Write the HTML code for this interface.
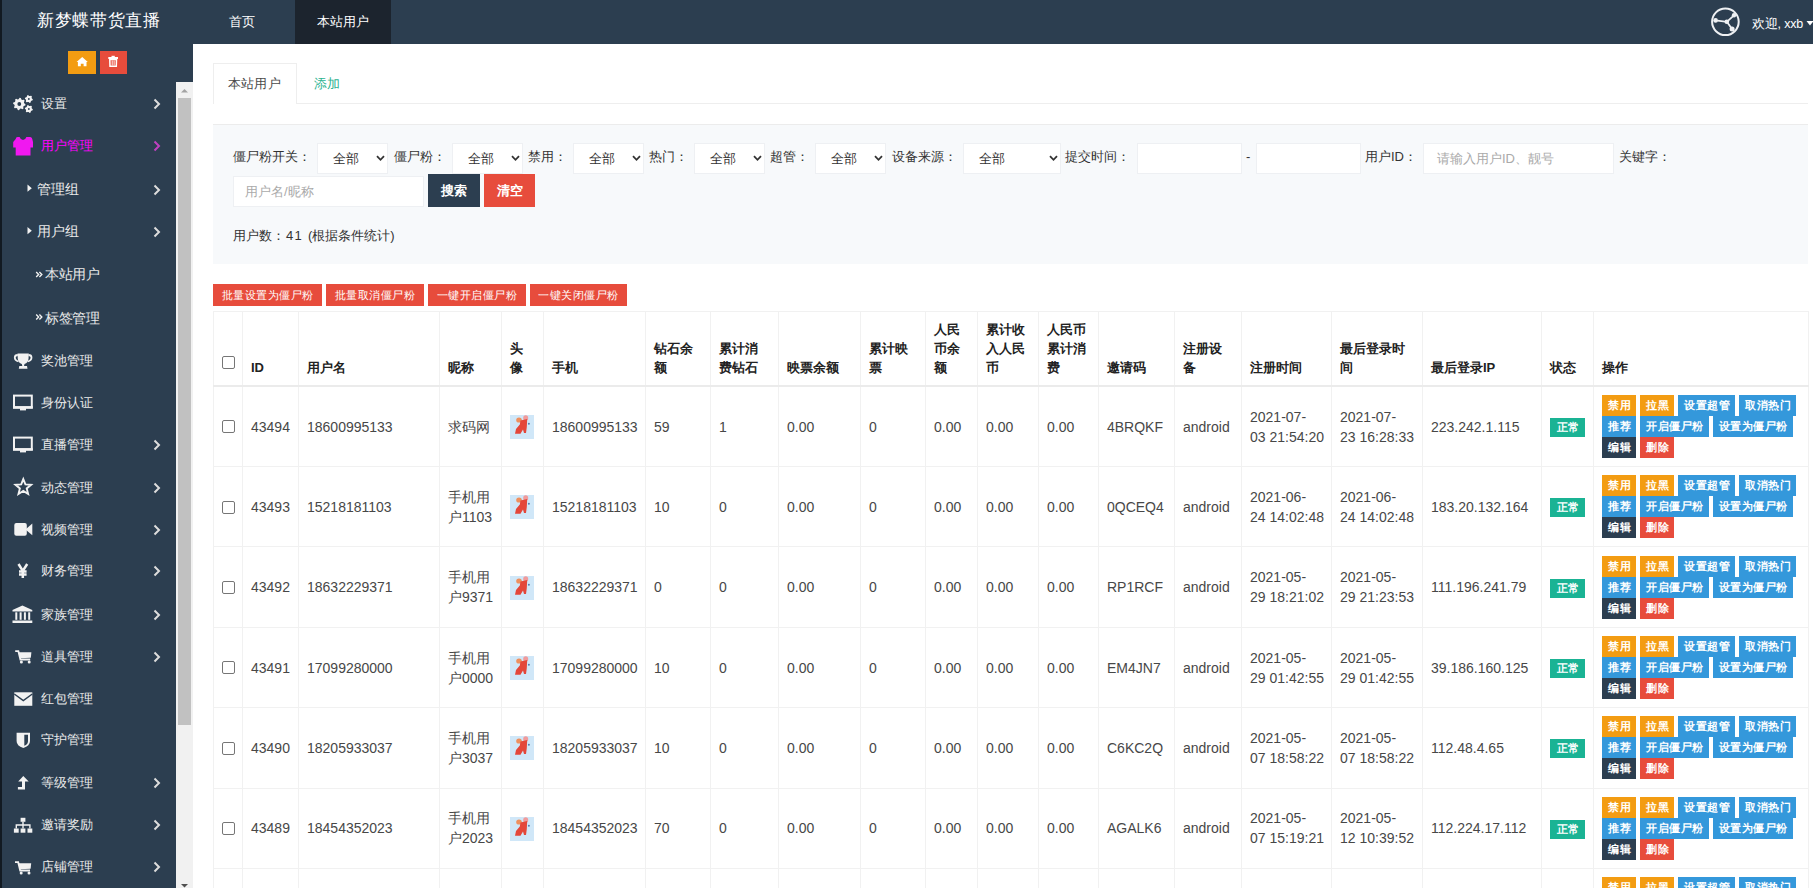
<!DOCTYPE html><html><head><meta charset="utf-8"><style>

*{box-sizing:border-box}
html,body{margin:0;padding:0}
body{width:1813px;height:888px;overflow:hidden;position:relative;background:#fff;font-family:"Liberation Sans",sans-serif;color:#333}
.a{position:absolute}
#nav{left:0;top:0;width:1813px;height:44px;background:#2c3e50}
#side{left:0;top:0;width:193px;height:888px;background:#2c3e50}
#strip{left:0;top:0;width:2px;height:888px;background:#121a22}
.logo{left:37px;top:10px;font-size:17px;letter-spacing:0.7px;color:#fff;line-height:22px;white-space:nowrap}
.ntab{top:0;height:44px;line-height:44px;font-size:12.5px;letter-spacing:-0.15px;color:#fff;text-align:center}
.mi{left:0;width:176px;height:20px;line-height:20px;font-size:13px;color:#eaeaea;white-space:nowrap}
.mi .t{position:absolute;left:41px;top:0}
.mi .ic{position:absolute;left:13px;top:0;width:20px;height:20px}
.mi .ar{position:absolute;left:153px;top:4px;width:8px;height:12px}
.sub .t{left:37px;font-size:13.5px;letter-spacing:-0.15px}
.sub2 .t{left:45px;font-size:13.5px;letter-spacing:-0.4px}
#sb{left:176px;top:82px;width:17px;height:806px;background:#f1f1f1}
#thumb{left:178px;top:98px;width:13px;height:627px;background:#c1c1c1}
.btn{font-weight:bold;display:inline-block;color:#fff;white-space:nowrap;text-align:center}
.sel{position:absolute;top:143px;height:31px;background:#fff;border:1px solid #eef0f3;font-size:13px;color:#333}
.sel span{position:absolute;left:15px;top:6px;line-height:18px}
.sel svg{position:absolute;top:11px}
.lbl{position:absolute;top:148px;font-size:13px;line-height:18px;color:#333;white-space:nowrap}
.inp{position:absolute;background:#fff;border:1px solid #eef0f3;font-size:13px;color:#aaa}
table{position:absolute;left:213px;top:311px;width:1595px;border-collapse:collapse;table-layout:fixed;font-size:14px;color:#333}
td,th{border:1px solid #f1f1f1;padding:0 8px;vertical-align:middle;text-align:left;overflow:hidden}
th{border-bottom:2px solid #ebebeb;white-space:nowrap;vertical-align:bottom;padding-bottom:8px;font-weight:bold;font-size:13px;line-height:19px;color:#222}
td{line-height:20px;white-space:nowrap;color:#474747}
.ops{line-height:0;padding:0 0 0 8px}
.ob{font-weight:bold;display:inline-block;height:21px;line-height:21px;font-size:11px;letter-spacing:0.5px;color:#fff;padding:0 5px 0 6px;margin-right:4px;vertical-align:top}
.or{background:#f39c12}.bl{background:#3498db}.dk{background:#2c3e50}.rd{background:#e74c3c}
.badge{font-weight:bold;display:inline-block;height:19px;line-height:19px;font-size:11px;letter-spacing:0.5px;color:#fff;background:#1ab394;padding:0 5.5px 0 6.5px}
.cb{display:inline-block;width:13px;height:13px;border:1px solid #767676;border-radius:2px;background:#fff;vertical-align:middle}

</style></head><body>
<div class="a" id="side"></div><div class="a" id="nav"></div><div class="a" id="strip"></div>
<div class="a logo">新梦蝶带货直播</div>
<div class="a ntab" style="left:215px;width:54px">首页</div>
<div class="a ntab" style="left:295px;width:96px;background:#1c242e">本站用户</div>
<div class="a" style="left:68px;top:51px;width:28px;height:23px;background:#f39c12"></div>
<div class="a" style="left:100px;top:51px;width:27px;height:23px;background:#e74c3c"></div>
<div class="a mi" style="top:93.5px;color:#eaeaea"><span class="t">设置</span><svg class="ar" viewBox="0 0 8 12"><path d="M1.5 1.5 L6 6 L1.5 10.5" fill="none" stroke="#ddd" stroke-width="2"/></svg></div>
<div class="a mi" style="top:135.7px;color:#ff00ff"><span class="t">用户管理</span><svg class="ar" viewBox="0 0 8 12"><path d="M1.5 1.5 L6 6 L1.5 10.5" fill="none" stroke="#c040c0" stroke-width="2"/></svg></div>
<div class="a mi sub" style="top:179.7px;color:#eaeaea"><span class="t">管理组</span><svg class="ar" viewBox="0 0 8 12"><path d="M1.5 1.5 L6 6 L1.5 10.5" fill="none" stroke="#ddd" stroke-width="2"/></svg></div>
<div class="a mi sub" style="top:221.9px;color:#eaeaea"><span class="t">用户组</span><svg class="ar" viewBox="0 0 8 12"><path d="M1.5 1.5 L6 6 L1.5 10.5" fill="none" stroke="#ddd" stroke-width="2"/></svg></div>
<div class="a mi sub2" style="top:265.3px;color:#eaeaea"><span class="t">本站用户</span></div>
<div class="a mi sub2" style="top:308.5px;color:#eaeaea"><span class="t">标签管理</span></div>
<div class="a mi" style="top:350.7px;color:#eaeaea"><span class="t">奖池管理</span></div>
<div class="a mi" style="top:393.0px;color:#eaeaea"><span class="t">身份认证</span></div>
<div class="a mi" style="top:435.0px;color:#eaeaea"><span class="t">直播管理</span><svg class="ar" viewBox="0 0 8 12"><path d="M1.5 1.5 L6 6 L1.5 10.5" fill="none" stroke="#ddd" stroke-width="2"/></svg></div>
<div class="a mi" style="top:477.6px;color:#eaeaea"><span class="t">动态管理</span><svg class="ar" viewBox="0 0 8 12"><path d="M1.5 1.5 L6 6 L1.5 10.5" fill="none" stroke="#ddd" stroke-width="2"/></svg></div>
<div class="a mi" style="top:519.5px;color:#eaeaea"><span class="t">视频管理</span><svg class="ar" viewBox="0 0 8 12"><path d="M1.5 1.5 L6 6 L1.5 10.5" fill="none" stroke="#ddd" stroke-width="2"/></svg></div>
<div class="a mi" style="top:561.0px;color:#eaeaea"><span class="t">财务管理</span><svg class="ar" viewBox="0 0 8 12"><path d="M1.5 1.5 L6 6 L1.5 10.5" fill="none" stroke="#ddd" stroke-width="2"/></svg></div>
<div class="a mi" style="top:604.5px;color:#eaeaea"><span class="t">家族管理</span><svg class="ar" viewBox="0 0 8 12"><path d="M1.5 1.5 L6 6 L1.5 10.5" fill="none" stroke="#ddd" stroke-width="2"/></svg></div>
<div class="a mi" style="top:647.0px;color:#eaeaea"><span class="t">道具管理</span><svg class="ar" viewBox="0 0 8 12"><path d="M1.5 1.5 L6 6 L1.5 10.5" fill="none" stroke="#ddd" stroke-width="2"/></svg></div>
<div class="a mi" style="top:688.9px;color:#eaeaea"><span class="t">红包管理</span></div>
<div class="a mi" style="top:730.3px;color:#eaeaea"><span class="t">守护管理</span></div>
<div class="a mi" style="top:772.8px;color:#eaeaea"><span class="t">等级管理</span><svg class="ar" viewBox="0 0 8 12"><path d="M1.5 1.5 L6 6 L1.5 10.5" fill="none" stroke="#ddd" stroke-width="2"/></svg></div>
<div class="a mi" style="top:815.2px;color:#eaeaea"><span class="t">邀请奖励</span><svg class="ar" viewBox="0 0 8 12"><path d="M1.5 1.5 L6 6 L1.5 10.5" fill="none" stroke="#ddd" stroke-width="2"/></svg></div>
<div class="a mi" style="top:857.2px;color:#eaeaea"><span class="t">店铺管理</span><svg class="ar" viewBox="0 0 8 12"><path d="M1.5 1.5 L6 6 L1.5 10.5" fill="none" stroke="#ddd" stroke-width="2"/></svg></div>
<div class="a" id="sb"></div><div class="a" id="thumb"></div>
<svg class="a" style="left:0;top:0" width="193" height="888" viewBox="0 0 193 888"><polygon points="25.49,104.30 25.31,105.51 23.73,106.10 23.24,106.92 23.46,108.59 22.49,109.32 20.95,108.61 20.02,108.85 19.00,110.19 17.79,110.01 17.20,108.43 16.38,107.94 14.71,108.16 13.98,107.19 14.69,105.65 14.45,104.72 13.11,103.70 13.29,102.49 14.87,101.90 15.36,101.08 15.14,99.41 16.11,98.68 17.65,99.39 18.58,99.15 19.60,97.81 20.81,97.99 21.40,99.57 22.22,100.06 23.89,99.84 24.62,100.81 23.91,102.35 24.15,103.28" fill="#f2f2f2"/><circle cx="19.3" cy="104" r="1.9" fill="#2c3e50"/><polygon points="32.84,99.26 32.64,100.29 31.43,100.72 30.89,101.33 30.62,102.59 29.63,102.92 28.65,102.09 27.85,101.94 26.63,102.33 25.84,101.64 26.07,100.37 25.81,99.60 24.86,98.74 25.06,97.71 26.27,97.28 26.81,96.67 27.08,95.41 28.07,95.08 29.05,95.91 29.85,96.06 31.07,95.67 31.86,96.36 31.63,97.63 31.89,98.40" fill="#f2f2f2"/><circle cx="28.85" cy="99" r="0.9" fill="#2c3e50"/><polygon points="32.84,109.26 32.64,110.29 31.43,110.72 30.89,111.33 30.62,112.59 29.63,112.92 28.65,112.09 27.85,111.94 26.63,112.33 25.84,111.64 26.07,110.37 25.81,109.60 24.86,108.74 25.06,107.71 26.27,107.28 26.81,106.67 27.08,105.41 28.07,105.08 29.05,105.91 29.85,106.06 31.07,105.67 31.86,106.36 31.63,107.63 31.89,108.40" fill="#f2f2f2"/><circle cx="28.85" cy="109" r="0.9" fill="#2c3e50"/><path d="M15.7 139 Q15.7 137 17.7 137 L19.6 137 Q20.6 140 23 140 Q25.4 140 26.4 137 L30.2 137 Q32.2 137 32.4 139.5 L33 142 L33 147.5 L30.5 147.5 L30.5 155.6 L15.7 155.6 L15.7 147.5 L13.2 147.5 L13.2 142 Z" fill="#f018f0"/><path d="M27.5 184.6 L31.8 188.2 L27.5 191.79999999999998 Z" fill="#f2f2f2"/><path d="M27.5 227.1 L31.8 230.7 L27.5 234.29999999999998 Z" fill="#f2f2f2"/><path d="M36.2 272.1 L38.6 274.5 L36.2 276.9 M39.4 272.1 L41.8 274.5 L39.4 276.9" fill="none" stroke="#f2f2f2" stroke-width="1.4"/><path d="M36.2 314.6 L38.6 317 L36.2 319.4 M39.4 314.6 L41.8 317 L39.4 319.4" fill="none" stroke="#f2f2f2" stroke-width="1.4"/><path d="M17.5 353.5 L28.8 353.5 L28.5 359 Q28 363 24.5 364 L24 366 L27 366 L27.5 368.7 L18.8 368.7 L19.3 366 L22.3 366 L21.8 364 Q18.3 363 17.8 359 Z" fill="#f2f2f2"/><path d="M17.8 355 Q14.8 355 14.8 357.5 Q14.8 360.5 18.5 361.5 M28.5 355 Q31.5 355 31.5 357.5 Q31.5 360.5 27.8 361.5" fill="none" stroke="#f2f2f2" stroke-width="1.8"/><rect x="14" y="395.6" width="17.8" height="12" fill="none" stroke="#f2f2f2" stroke-width="2"/><rect x="13" y="406.1" width="19.8" height="2.5" fill="#f2f2f2"/><rect x="20" y="408.1" width="6" height="2.3" fill="#f2f2f2"/><rect x="14" y="437.6" width="17.8" height="12" fill="none" stroke="#f2f2f2" stroke-width="2"/><rect x="13" y="448.1" width="19.8" height="2.5" fill="#f2f2f2"/><rect x="20" y="450.1" width="6" height="2.3" fill="#f2f2f2"/><polygon points="23.30,479.10 25.42,484.39 31.10,484.77 26.72,488.41 28.12,493.93 23.30,490.90 18.48,493.93 19.88,488.41 15.50,484.77 21.18,484.39" fill="none" stroke="#f2f2f2" stroke-width="1.9" stroke-linejoin="miter"/><rect x="14.3" y="523" width="12.5" height="12.8" rx="2" fill="#f2f2f2"/><path d="M25.5 529.4 L32.3 523.5 L32.3 535.3 Z" fill="#f2f2f2"/><path d="M18.5 564 L22.8 571 L27.2 564 M22.8 571 L22.8 578 M19 571.5 L26.6 571.5 M19 574.5 L26.6 574.5" fill="none" stroke="#f2f2f2" stroke-width="2.5"/><path d="M12.5 610 L22.4 605.5 L32.3 610 L32.3 611.5 L12.5 611.5 Z" fill="#f2f2f2"/><rect x="15.3" y="612.3" width="2" height="7.5" fill="#f2f2f2"/><rect x="19.6" y="612.3" width="2" height="7.5" fill="#f2f2f2"/><rect x="23.9" y="612.3" width="2" height="7.5" fill="#f2f2f2"/><rect x="28.2" y="612.3" width="2" height="7.5" fill="#f2f2f2"/><rect x="12.5" y="620.5" width="19.8" height="2.5" fill="#f2f2f2"/><path d="M15.2 651.2 L18.4 651.2 L20.4 659.5 L30.2 659.5" fill="none" stroke="#f2f2f2" stroke-width="1.8"/><path d="M18.8 652.3 L31.4 652.3 L30.799999999999997 657.8 L20.2 658.3 Z" fill="#f2f2f2"/><circle cx="21.4" cy="662" r="1.5" fill="#f2f2f2"/><circle cx="29.2" cy="662" r="1.5" fill="#f2f2f2"/><path d="M15 862.2 L18.2 862.2 L20.2 870.5 L30 870.5" fill="none" stroke="#f2f2f2" stroke-width="1.8"/><path d="M18.6 863.3 L31.2 863.3 L30.6 868.8 L20 869.3 Z" fill="#f2f2f2"/><circle cx="21.2" cy="873" r="1.5" fill="#f2f2f2"/><circle cx="29" cy="873" r="1.5" fill="#f2f2f2"/><rect x="14.3" y="692.3" width="18" height="13.5" fill="#f2f2f2"/><path d="M14.3 694 L23.3 700.5 L32.3 694" fill="none" stroke="#2c3e50" stroke-width="1.5"/><path d="M16.6 732.8 L30 732.8 L30 741 Q30 746 23.3 748 Q16.6 746 16.6 741 Z" fill="#f2f2f2"/><path d="M24.3 734.8 L28 734.8 L28 741 Q28 744.5 24.3 745.8 Z" fill="#2c3e50"/><path d="M23.3 776 L28.7 781.5 L25 781.5 L25 789.5 L17.9 789.5 L17.9 787 L22 787 L22 781.5 L18.2 781.5 Z" fill="#f2f2f2"/><rect x="20.6" y="817.8" width="4.8" height="4" fill="#f2f2f2"/><path d="M23 821.8 L23 825 M16.3 828.5 L16.3 825 L29.9 825 L29.9 828.5 M23 825 L23 828.5" fill="none" stroke="#f2f2f2" stroke-width="1.4"/><rect x="13.9" y="828.5" width="4.8" height="4.2" fill="#f2f2f2"/><rect x="20.6" y="828.5" width="4.8" height="4.2" fill="#f2f2f2"/><rect x="27.5" y="828.5" width="4.8" height="4.2" fill="#f2f2f2"/><path d="M82.2 57 L87.8 62 L86.5 62 L86.5 66.2 L83.6 66.2 L83.6 63.8 L80.8 63.8 L80.8 66.2 L77.9 66.2 L77.9 62 L76.6 62 Z" fill="#fff"/><rect x="108.3" y="57" width="9.7" height="2" fill="#fff"/><rect x="111.5" y="55.8" width="3.3" height="1.6" fill="#fff"/><path d="M109.8 59.5 L116.5 59.5 L116.3 66.2 L110 66.2 Z" fill="none" stroke="#fff" stroke-width="1.5"/><path d="M112.2 60.5 L112.2 65.5 M114.1 60.5 L114.1 65.5" stroke="#fff" stroke-width="0.9"/><path d="M181 92.5 L184.5 89 L188 92.5 Z" fill="#a3a3a3"/><path d="M181 884 L184.5 887.5 L188 884 Z" fill="#505050"/></svg>
<svg class="a" style="left:1700px;top:0" width="50" height="44" viewBox="1700 0 50 44"><circle cx="1725.4" cy="21.8" r="13.3" fill="none" stroke="#eef0f3" stroke-width="2"/><path d="M1715.6 20.4 L1726.8 21.8 L1734 15.3 M1726.8 21.8 L1732.1 29" fill="none" stroke="#eef0f3" stroke-width="1.8"/><circle cx="1715.6" cy="20.4" r="2.3" fill="#eef0f3"/><circle cx="1726.8" cy="21.8" r="2.3" fill="#eef0f3"/><circle cx="1734" cy="15.3" r="2.2" fill="#eef0f3"/><circle cx="1732.1" cy="29" r="2.5" fill="#eef0f3"/></svg><svg class="a" style="left:1805px;top:20px" width="8" height="7" viewBox="0 0 8 7"><path d="M1.5 1 L8.5 1 L5 5.5 Z" fill="#fff"/></svg>
<div class="a" style="left:1752px;top:15.5px;font-size:12.5px;letter-spacing:-0.2px;line-height:16px;color:#fff;white-space:nowrap">欢迎, xxb</div>
<div class="a" style="left:213px;top:103px;width:1595px;height:1px;background:#eeeeee"></div>
<div class="a" style="left:213px;top:63px;width:84px;height:41px;background:#fff;border:1px solid #eeeeee;border-bottom:none"></div>
<div class="a" style="left:228px;top:75px;font-size:13px;letter-spacing:0.2px;line-height:18px;color:#4a4a4a">本站用户</div>
<div class="a" style="left:314px;top:75px;font-size:13px;line-height:18px;color:#2db491">添加</div>
<div class="a" style="left:213px;top:123.5px;width:1595px;height:140.5px;background:#f7f9fb;border-top:1px solid #ececec"></div>
<div class="lbl" style="left:233px">僵尸粉开关：</div>
<div class="lbl" style="left:394px">僵尸粉：</div>
<div class="lbl" style="left:528px">禁用：</div>
<div class="lbl" style="left:649px">热门：</div>
<div class="lbl" style="left:770px">超管：</div>
<div class="lbl" style="left:892px">设备来源：</div>
<div class="lbl" style="left:1065px">提交时间：</div>
<div class="lbl" style="left:1246px">-</div>
<div class="lbl" style="left:1365px">用户ID：</div>
<div class="lbl" style="left:1619px">关键字：</div>
<div class="sel" style="left:317px;width:71px"><span>全部</span><svg style="left:58px" width="9" height="7" viewBox="0 0 9 7"><path d="M1 1.2 L4.5 4.8 L8 1.2" fill="none" stroke="#333" stroke-width="1.8"/></svg></div>
<div class="sel" style="left:452px;width:71px"><span>全部</span><svg style="left:58px" width="9" height="7" viewBox="0 0 9 7"><path d="M1 1.2 L4.5 4.8 L8 1.2" fill="none" stroke="#333" stroke-width="1.8"/></svg></div>
<div class="sel" style="left:573px;width:71px"><span>全部</span><svg style="left:58px" width="9" height="7" viewBox="0 0 9 7"><path d="M1 1.2 L4.5 4.8 L8 1.2" fill="none" stroke="#333" stroke-width="1.8"/></svg></div>
<div class="sel" style="left:694px;width:71px"><span>全部</span><svg style="left:58px" width="9" height="7" viewBox="0 0 9 7"><path d="M1 1.2 L4.5 4.8 L8 1.2" fill="none" stroke="#333" stroke-width="1.8"/></svg></div>
<div class="sel" style="left:815px;width:71px"><span>全部</span><svg style="left:58px" width="9" height="7" viewBox="0 0 9 7"><path d="M1 1.2 L4.5 4.8 L8 1.2" fill="none" stroke="#333" stroke-width="1.8"/></svg></div>
<div class="sel" style="left:963px;width:98px"><span>全部</span><svg style="left:85px" width="9" height="7" viewBox="0 0 9 7"><path d="M1 1.2 L4.5 4.8 L8 1.2" fill="none" stroke="#333" stroke-width="1.8"/></svg></div>
<div class="inp" style="left:1137px;top:143px;width:105px;height:31px"></div>
<div class="inp" style="left:1256px;top:143px;width:105px;height:31px"></div>
<div class="inp" style="left:1423px;top:143px;width:191px;height:31px"><span style="position:absolute;left:13px;top:6px;line-height:18px">请输入用户ID、靓号</span></div>
<div class="inp" style="left:233px;top:176px;width:191px;height:31px"><span style="position:absolute;left:11px;top:6px;line-height:18px">用户名/昵称</span></div>
<div class="a btn" style="left:428px;top:174px;width:52px;height:33px;line-height:33px;font-size:13px;background:#2c3e50">搜索</div>
<div class="a btn" style="left:484px;top:174px;width:51px;height:33px;line-height:33px;font-size:13px;background:#e74c3c">清空</div>
<div class="lbl" style="left:233px;top:227px">用户数：<span style="margin-left:1px;letter-spacing:1.3px">41 </span>(根据条件统计)</div>
<div class="a btn" style="left:213px;top:284px;width:109px;height:22px;line-height:22px;font-size:11px;letter-spacing:0.5px;font-weight:normal;background:#e74c3c">批量设置为僵尸粉</div>
<div class="a btn" style="left:326px;top:284px;width:98px;height:22px;line-height:22px;font-size:11px;letter-spacing:0.5px;font-weight:normal;background:#e74c3c">批量取消僵尸粉</div>
<div class="a btn" style="left:428px;top:284px;width:98px;height:22px;line-height:22px;font-size:11px;letter-spacing:0.5px;font-weight:normal;background:#e74c3c">一键开启僵尸粉</div>
<div class="a btn" style="left:530px;top:284px;width:97px;height:22px;line-height:22px;font-size:11px;letter-spacing:0.5px;font-weight:normal;background:#e74c3c">一键关闭僵尸粉</div>
<table><colgroup><col style="width:29px"><col style="width:56px"><col style="width:141px"><col style="width:62px"><col style="width:42px"><col style="width:102px"><col style="width:65px"><col style="width:68px"><col style="width:82px"><col style="width:65px"><col style="width:52px"><col style="width:61px"><col style="width:60px"><col style="width:76px"><col style="width:67px"><col style="width:90px"><col style="width:91px"><col style="width:119px"><col style="width:52px"><col style="width:215px"></colgroup>
<tr style="height:74.7px"><th><span class="cb" style="position:relative;top:-6.5px"></span></th><th>ID</th><th>用户名</th><th>昵称</th><th>头<br>像</th><th>手机</th><th>钻石余<br>额</th><th>累计消<br>费钻石</th><th>映票余额</th><th>累计映<br>票</th><th>人民<br>币余<br>额</th><th>累计收<br>入人民<br>币</th><th>人民币<br>累计消<br>费</th><th>邀请码</th><th>注册设<br>备</th><th>注册时间</th><th>最后登录时<br>间</th><th>最后登录IP</th><th>状态</th><th>操作</th></tr>
<tr style="height:80.38px"><td><span class="cb" style="position:relative;top:-1px"></span></td><td>43494</td><td>18600995133</td><td>求码网</td><td><svg width="24" height="24" viewBox="0 0 24 24" style="vertical-align:middle;position:relative;top:0.5px"><rect width="24" height="24" fill="#d0e7f8"/><ellipse cx="9" cy="5" rx="2.8" ry="2.6" fill="#ef8f5e"/><ellipse cx="15.7" cy="2.9" rx="2.5" ry="2.6" fill="#f19b9b"/><path d="M10.5 5.5 L17.2 4 L16.8 12 L16 18 L14 18 L13 14.5 L10.5 18.8 L5 18.8 L6 14 L9.8 9.5 Z" fill="#e4473a"/><circle cx="18.9" cy="8.7" r="1" fill="#5a7fb0"/></svg></td><td>18600995133</td><td>59</td><td>1</td><td>0.00</td><td>0</td><td>0.00</td><td>0.00</td><td>0.00</td><td>4BRQKF</td><td>android</td><td>2021-07-<br>03 21:54:20</td><td>2021-07-<br>23 16:28:33</td><td>223.242.1.115</td><td><span class="badge">正常</span></td><td class="ops"><div><span class="ob or">禁用</span><span class="ob or">拉黑</span><span class="ob bl">设置超管</span><span class="ob bl">取消热门</span></div><div><span class="ob bl">推荐</span><span class="ob bl">开启僵尸粉</span><span class="ob bl">设置为僵尸粉</span></div><div><span class="ob dk">编辑</span><span class="ob rd">删除</span></div></td></tr>
<tr style="height:80.38px"><td><span class="cb" style="position:relative;top:-1px"></span></td><td>43493</td><td>15218181103</td><td>手机用<br>户1103</td><td><svg width="24" height="24" viewBox="0 0 24 24" style="vertical-align:middle;position:relative;top:0.5px"><rect width="24" height="24" fill="#d0e7f8"/><ellipse cx="9" cy="5" rx="2.8" ry="2.6" fill="#ef8f5e"/><ellipse cx="15.7" cy="2.9" rx="2.5" ry="2.6" fill="#f19b9b"/><path d="M10.5 5.5 L17.2 4 L16.8 12 L16 18 L14 18 L13 14.5 L10.5 18.8 L5 18.8 L6 14 L9.8 9.5 Z" fill="#e4473a"/><circle cx="18.9" cy="8.7" r="1" fill="#5a7fb0"/></svg></td><td>15218181103</td><td>10</td><td>0</td><td>0.00</td><td>0</td><td>0.00</td><td>0.00</td><td>0.00</td><td>0QCEQ4</td><td>android</td><td>2021-06-<br>24 14:02:48</td><td>2021-06-<br>24 14:02:48</td><td>183.20.132.164</td><td><span class="badge">正常</span></td><td class="ops"><div><span class="ob or">禁用</span><span class="ob or">拉黑</span><span class="ob bl">设置超管</span><span class="ob bl">取消热门</span></div><div><span class="ob bl">推荐</span><span class="ob bl">开启僵尸粉</span><span class="ob bl">设置为僵尸粉</span></div><div><span class="ob dk">编辑</span><span class="ob rd">删除</span></div></td></tr>
<tr style="height:80.38px"><td><span class="cb" style="position:relative;top:-1px"></span></td><td>43492</td><td>18632229371</td><td>手机用<br>户9371</td><td><svg width="24" height="24" viewBox="0 0 24 24" style="vertical-align:middle;position:relative;top:0.5px"><rect width="24" height="24" fill="#d0e7f8"/><ellipse cx="9" cy="5" rx="2.8" ry="2.6" fill="#ef8f5e"/><ellipse cx="15.7" cy="2.9" rx="2.5" ry="2.6" fill="#f19b9b"/><path d="M10.5 5.5 L17.2 4 L16.8 12 L16 18 L14 18 L13 14.5 L10.5 18.8 L5 18.8 L6 14 L9.8 9.5 Z" fill="#e4473a"/><circle cx="18.9" cy="8.7" r="1" fill="#5a7fb0"/></svg></td><td>18632229371</td><td>0</td><td>0</td><td>0.00</td><td>0</td><td>0.00</td><td>0.00</td><td>0.00</td><td>RP1RCF</td><td>android</td><td>2021-05-<br>29 18:21:02</td><td>2021-05-<br>29 21:23:53</td><td>111.196.241.79</td><td><span class="badge">正常</span></td><td class="ops"><div><span class="ob or">禁用</span><span class="ob or">拉黑</span><span class="ob bl">设置超管</span><span class="ob bl">取消热门</span></div><div><span class="ob bl">推荐</span><span class="ob bl">开启僵尸粉</span><span class="ob bl">设置为僵尸粉</span></div><div><span class="ob dk">编辑</span><span class="ob rd">删除</span></div></td></tr>
<tr style="height:80.38px"><td><span class="cb" style="position:relative;top:-1px"></span></td><td>43491</td><td>17099280000</td><td>手机用<br>户0000</td><td><svg width="24" height="24" viewBox="0 0 24 24" style="vertical-align:middle;position:relative;top:0.5px"><rect width="24" height="24" fill="#d0e7f8"/><ellipse cx="9" cy="5" rx="2.8" ry="2.6" fill="#ef8f5e"/><ellipse cx="15.7" cy="2.9" rx="2.5" ry="2.6" fill="#f19b9b"/><path d="M10.5 5.5 L17.2 4 L16.8 12 L16 18 L14 18 L13 14.5 L10.5 18.8 L5 18.8 L6 14 L9.8 9.5 Z" fill="#e4473a"/><circle cx="18.9" cy="8.7" r="1" fill="#5a7fb0"/></svg></td><td>17099280000</td><td>10</td><td>0</td><td>0.00</td><td>0</td><td>0.00</td><td>0.00</td><td>0.00</td><td>EM4JN7</td><td>android</td><td>2021-05-<br>29 01:42:55</td><td>2021-05-<br>29 01:42:55</td><td>39.186.160.125</td><td><span class="badge">正常</span></td><td class="ops"><div><span class="ob or">禁用</span><span class="ob or">拉黑</span><span class="ob bl">设置超管</span><span class="ob bl">取消热门</span></div><div><span class="ob bl">推荐</span><span class="ob bl">开启僵尸粉</span><span class="ob bl">设置为僵尸粉</span></div><div><span class="ob dk">编辑</span><span class="ob rd">删除</span></div></td></tr>
<tr style="height:80.38px"><td><span class="cb" style="position:relative;top:-1px"></span></td><td>43490</td><td>18205933037</td><td>手机用<br>户3037</td><td><svg width="24" height="24" viewBox="0 0 24 24" style="vertical-align:middle;position:relative;top:0.5px"><rect width="24" height="24" fill="#d0e7f8"/><ellipse cx="9" cy="5" rx="2.8" ry="2.6" fill="#ef8f5e"/><ellipse cx="15.7" cy="2.9" rx="2.5" ry="2.6" fill="#f19b9b"/><path d="M10.5 5.5 L17.2 4 L16.8 12 L16 18 L14 18 L13 14.5 L10.5 18.8 L5 18.8 L6 14 L9.8 9.5 Z" fill="#e4473a"/><circle cx="18.9" cy="8.7" r="1" fill="#5a7fb0"/></svg></td><td>18205933037</td><td>10</td><td>0</td><td>0.00</td><td>0</td><td>0.00</td><td>0.00</td><td>0.00</td><td>C6KC2Q</td><td>android</td><td>2021-05-<br>07 18:58:22</td><td>2021-05-<br>07 18:58:22</td><td>112.48.4.65</td><td><span class="badge">正常</span></td><td class="ops"><div><span class="ob or">禁用</span><span class="ob or">拉黑</span><span class="ob bl">设置超管</span><span class="ob bl">取消热门</span></div><div><span class="ob bl">推荐</span><span class="ob bl">开启僵尸粉</span><span class="ob bl">设置为僵尸粉</span></div><div><span class="ob dk">编辑</span><span class="ob rd">删除</span></div></td></tr>
<tr style="height:80.38px"><td><span class="cb" style="position:relative;top:-1px"></span></td><td>43489</td><td>18454352023</td><td>手机用<br>户2023</td><td><svg width="24" height="24" viewBox="0 0 24 24" style="vertical-align:middle;position:relative;top:0.5px"><rect width="24" height="24" fill="#d0e7f8"/><ellipse cx="9" cy="5" rx="2.8" ry="2.6" fill="#ef8f5e"/><ellipse cx="15.7" cy="2.9" rx="2.5" ry="2.6" fill="#f19b9b"/><path d="M10.5 5.5 L17.2 4 L16.8 12 L16 18 L14 18 L13 14.5 L10.5 18.8 L5 18.8 L6 14 L9.8 9.5 Z" fill="#e4473a"/><circle cx="18.9" cy="8.7" r="1" fill="#5a7fb0"/></svg></td><td>18454352023</td><td>70</td><td>0</td><td>0.00</td><td>0</td><td>0.00</td><td>0.00</td><td>0.00</td><td>AGALK6</td><td>android</td><td>2021-05-<br>07 15:19:21</td><td>2021-05-<br>12 10:39:52</td><td>112.224.17.112</td><td><span class="badge">正常</span></td><td class="ops"><div><span class="ob or">禁用</span><span class="ob or">拉黑</span><span class="ob bl">设置超管</span><span class="ob bl">取消热门</span></div><div><span class="ob bl">推荐</span><span class="ob bl">开启僵尸粉</span><span class="ob bl">设置为僵尸粉</span></div><div><span class="ob dk">编辑</span><span class="ob rd">删除</span></div></td></tr>
<tr style="height:80px"><td></td><td></td><td></td><td></td><td></td><td></td><td></td><td></td><td></td><td></td><td></td><td></td><td></td><td></td><td></td><td></td><td></td><td></td><td></td><td class="ops" style="vertical-align:top;padding-top:8px"><div><span class="ob or">禁用</span><span class="ob or">拉黑</span><span class="ob bl">设置超管</span><span class="ob bl">取消热门</span></div><div><span class="ob bl">推荐</span><span class="ob bl">开启僵尸粉</span><span class="ob bl">设置为僵尸粉</span></div><div><span class="ob dk">编辑</span><span class="ob rd">删除</span></div></td></tr>
</table>
</body></html>
